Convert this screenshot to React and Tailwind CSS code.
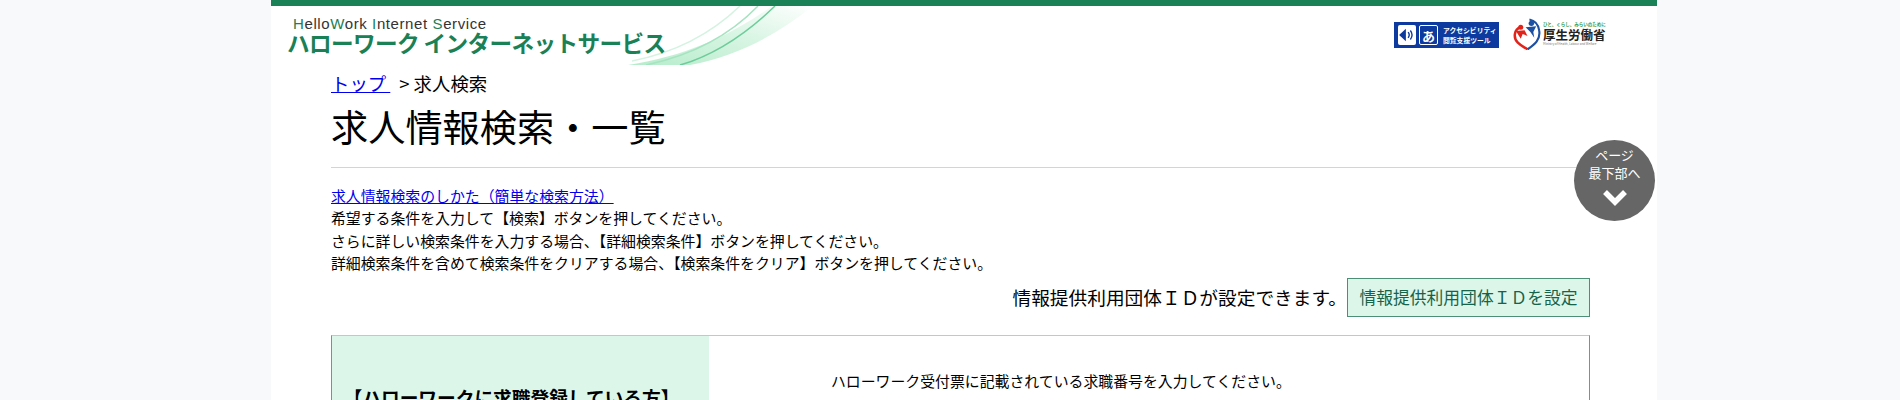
const jp = { fontFamily: '"Noto Sans CJK JP", sans-serif' };

// swoosh behind the service name
function HeaderSwoosh() {
  return (
    <svg className="absolute left-[357px] top-0" width="185" height="59" viewBox="0 0 185 59" fill="none">
      <defs>
        <linearGradient id="sw" x1="0" y1="1" x2="1" y2="0">
          <stop offset="0" stopColor="#b5eccb" />
          <stop offset="0.55" stopColor="#d8f5e3" />
          <stop offset="1" stopColor="#ffffff" />
        </linearGradient>
      </defs>
      <path d="M0 59 C60 50 105 28 144 0 L185 0 C150 28 110 50 62 59 Z" fill="url(#sw)" />
      <path d="M4 55 C50 46 85 26 112 0" stroke="#d4f3e1" strokeWidth="1.5" />
      <path d="M18 59 C70 48 105 26 130 0" stroke="#a6e3c0" strokeWidth="1.5" />
      <path d="M52 59 C90 48 120 26 147 0" stroke="#6dcd9a" strokeWidth="1.5" />
    </svg>
  );
}

function AccessBadge() {
  return (
    <div className="flex items-center w-[105px] h-[26px] bg-[#0d3a9e] px-1 gap-[3px] overflow-hidden">
      <div className="w-[18px] h-[20px] bg-white rounded-[2px] flex items-center justify-center shrink-0">
        <svg width="18" height="18" viewBox="0 0 16 16" fill="none">
          <path d="M1 8 L7 2.5 V13.5 Z" fill="#0d3a9e" />
          <path d="M9 5.5 Q11 8 9 10.5 M11 4 Q14 8 11 12" stroke="#0d3a9e" strokeWidth="1.2" />
        </svg>
      </div>
      <div className="w-[19px] h-[20px] border border-white rounded-[2px] flex items-center justify-center shrink-0 text-white text-[13px] font-bold leading-none">
        あ
      </div>
      <div className="flex flex-col text-white font-bold text-[6.8px] leading-[10px] ml-[2px] whitespace-nowrap">
        <span>アクセシビリティ</span>
        <span>閲覧支援ツール</span>
      </div>
    </div>
  );
}

function MhlwLogo() {
  return (
    <div className="flex items-center w-[92px] h-[32px]">
      <svg width="29" height="32" viewBox="0 0 30 32" fill="none" className="shrink-0">
        <path d="M8 9 C1 11 0 20 5 25 C9 29 13 30 15 32" stroke="#e2231a" strokeWidth="2.6" />
        <path d="M15 32 C22 27 29 22 27 12 C26 6 22 2 17 1" stroke="#1d50a2" strokeWidth="2.2" />
        <circle cx="8" cy="9" r="2.6" fill="#e2231a" />
        <path d="M3 13 L12 12 L15 18 L10 16 L8 21 Z" fill="#e2231a" />
        <circle cx="19" cy="5" r="2.8" fill="#1d50a2" />
        <path d="M13 9 L24 8 L21 14 L22 20 L18 14 Z" fill="#1d50a2" />
      </svg>
      <div className="flex flex-col items-start ml-[1px] whitespace-nowrap">
        <span className="text-[4.5px] leading-[6px] text-[#2c9a55] font-bold">ひと、くらし、みらいのために</span>
        <span className="text-[12.5px] leading-[15px] text-[#222] font-bold">厚生労働省</span>
        <span className="text-[3px] leading-[5px] text-[#777]">Ministry of Health, Labour and Welfare</span>
      </div>
    </div>
  );
}

function Header() {
  return (
    <header className="relative h-[59px] flex justify-between overflow-hidden">
      <HeaderSwoosh />
      <div className="relative pl-[16px] pt-[10px] whitespace-nowrap">
        <div className="pl-[6px] text-[15px] leading-[15px] text-[#333] tracking-[0.6px]" style={{ fontFamily: '"Liberation Sans", sans-serif' }}>
          <span className="text-[#1a8055]">H</span>ello<span className="text-[#1a8055]">W</span>ork <span className="text-[#1a8055]">I</span>nternet <span className="text-[#1a8055]">S</span>ervice
        </div>
        <div className="text-[22.6px] leading-[24px] font-bold text-[#1a8055] tracking-[-0.6px]">ハローワーク インターネットサービス</div>
      </div>
      <div className="flex items-start gap-[14px] pr-[52px] pt-[12px]">
        <div className="pt-[4px]"><AccessBadge /></div>
        <MhlwLogo />
      </div>
    </header>
  );
}

export default function App() {
  return (
    <div className="h-[400px] overflow-hidden bg-[#f8f9fa] text-black" style={jp}>
      <div className="relative w-[1386px] ml-[271px] bg-white h-[400px] overflow-hidden">
        <div className="h-[6px] bg-[#1a8055]" />
        <Header />

        <main className="pl-[60px] pr-[67px]">
          <div className="pt-[6px] text-[18.4px] leading-[24px] whitespace-nowrap">
            <a href="#" className="text-[#0000ee] underline">トップ&nbsp;</a>
            <span className="ml-[9px]">&gt; 求人検索</span>
          </div>
          <h1 className="mt-[6px] text-[37.2px] leading-[50px] font-normal">求人情報検索・一覧</h1>
          <hr className="mt-[16px] border-t border-[#d4d4d4]" />

          <div className="mt-[17px] text-[14.88px] leading-[22.4px]">
            <a href="#" className="block text-[#0000ee] underline">求人情報検索のしかた（簡単な検索方法）</a>
            <p>希望する条件を入力して【検索】ボタンを押してください。</p>
            <p>さらに詳しい検索条件を入力する場合、【詳細検索条件】ボタンを押してください。</p>
            <p>詳細検索条件を含めて検索条件をクリアする場合、【検索条件をクリア】ボタンを押してください。</p>
          </div>

          <div className="mt-[3px] flex items-center justify-end">
            <span className="text-[18.7px]">情報提供利用団体ＩＤが設定できます。</span>
            <button className="h-[39px] w-[243px] bg-[#dcf7ea] border border-[#4d8f76] text-[#17634a] text-[16.8px]">
              情報提供利用団体ＩＤを設定
            </button>
          </div>

          <div className="mt-[18px] flex h-[200px] border border-[#6a9c8a] border-t-[#b5cfc5]">
            <div className="w-[377px] bg-[#dcf7ea] pt-[48px] pr-[18px] text-center font-bold text-[18.7px] leading-[26px] whitespace-nowrap">
              【ハローワークに求職登録している方】
            </div>
            <div className="pl-[122px] pt-[34px] text-[14.88px] leading-[22px]">
              ハローワーク受付票に記載されている求職番号を入力してください。
            </div>
          </div>
        </main>

        <a href="#" className="absolute left-[1303px] top-[140px] w-[81px] h-[81px] rounded-full bg-[#666] text-white flex flex-col items-center pt-[6px] no-underline">
          <span className="text-[13px] leading-[18px]">ページ</span>
          <span className="text-[13px] leading-[18px]">最下部へ</span>
          <svg width="26" height="18" viewBox="0 0 26 18" fill="none" className="mt-[6px]">
            <path d="M3 4 L13 14 L23 4" stroke="#fff" strokeWidth="5.5" />
          </svg>
        </a>
      </div>
    </div>
  );
}
